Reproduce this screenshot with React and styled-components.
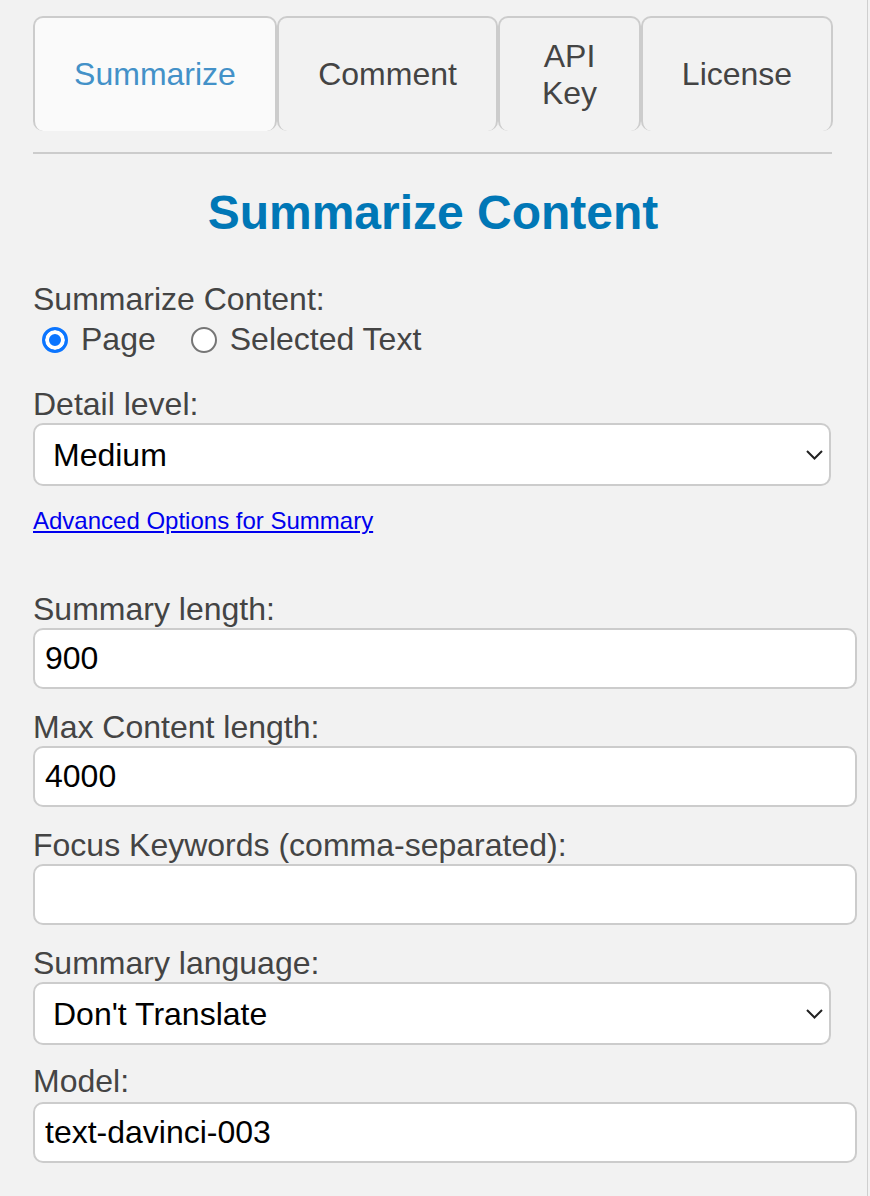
import React from "react";
import styled, { createGlobalStyle } from "styled-components";

const GlobalStyle = createGlobalStyle`
    html, body {
        margin: 0;
        padding: 0;
        background-color: #f2f2f2;
    }
    body {
        font-family: "Liberation Sans", Arial, Helvetica, sans-serif;
        font-size: 32px;
        color: #444;
    }
`;

const Page = styled.div`
    width: 868px;
    min-height: 1196px;
    box-sizing: border-box;
    border-right: 1px solid #cfcfcf;
    padding: 16px 0 0 33px;
`;

const Container = styled.div`
    width: 800px;
`;

const Tabs = styled.div`
    display: flex;
    height: 115px;
`;

const Tab = styled.button`
    width: ${(props) => props.width}px;
    flex: none;
    display: flex;
    align-items: center;
    justify-content: center;
    box-sizing: border-box;
    padding: 0 40px;
    border: 2px solid #cccccc;
    border-bottom: none;
    border-radius: 10px;
    background-color: ${(props) => (props.active ? "#fafafa" : "#f2f2f2")};
    color: ${(props) => (props.active ? "#4391c8" : "#444")};
    font-family: inherit;
    font-size: 32px;
    line-height: 37px;
    text-align: center;
    cursor: pointer;
`;

const Divider = styled.div`
    height: 2px;
    width: 799px;
    margin-top: 21px;
    background-color: #cccccc;
`;

const Title = styled.h2`
    margin: 31px 0 0 0;
    font-size: 48px;
    line-height: 55px;
    font-weight: bold;
    color: #0077b6;
    text-align: center;
`;

const Field = styled.div`
    margin-top: ${(props) => props.top}px;
`;

const Label = styled.label`
    display: block;
    font-size: 32px;
    line-height: 37px;
    color: #444;
    margin-bottom: ${(props) => props.gap || 0}px;
`;

const RadioRow = styled.div`
    display: flex;
    align-items: center;
    height: 43px;
    padding-left: 9px;
`;

const RadioOption = styled.label`
    display: flex;
    align-items: center;
    margin-right: 35px;
    font-size: 32px;
    color: #444;
`;

const Radio = styled.input`
    appearance: none;
    width: 26px;
    height: 26px;
    margin: 0 13px 0 0;
    box-sizing: border-box;
    border-radius: 50%;
    border: 2px solid #767676;
    background-color: #fff;
    &:checked {
        border: 3px solid #0b75ff;
        box-shadow: inset 0 0 0 4px #fff;
        background-color: #0b75ff;
    }
`;

const SelectWrap = styled.div`
    position: relative;
    width: 798px;
`;

const Select = styled.select`
    appearance: none;
    display: block;
    width: 100%;
    height: 63px;
    box-sizing: border-box;
    padding: 0 40px 0 18px;
    border: 2px solid #cccccc;
    border-radius: 10px;
    background-color: #fff;
    color: #000;
    font-family: inherit;
    font-size: 32px;
`;

const Chevron = styled.svg`
    position: absolute;
    right: 8px;
    top: 27px;
    pointer-events: none;
`;

const Input = styled.input`
    display: block;
    width: 800px;
    box-sizing: content-box;
    padding: 0 10px;
    height: 57px;
    border: 2px solid #cccccc;
    border-radius: 10px;
    background-color: #fff;
    color: #000;
    font-family: inherit;
    font-size: 32px;
    outline: none;
`;

const AdvancedLink = styled.a`
    display: inline-block;
    margin-top: 21px;
    font-size: 24px;
    line-height: 28px;
    color: #0000ee;
    text-decoration: underline;
`;

const tabs = [
    { name: "Summarize", width: 244, active: true },
    { name: "Comment", width: 221 },
    { name: "API Key", width: 143 },
    { name: "License", width: 192 },
];

const DropDown = ({ value, options }) => (
    <SelectWrap>
        <Select defaultValue={value}>
            {options.map((o) => (
                <option key={o}>{o}</option>
            ))}
        </Select>
        <Chevron width="17" height="10" viewBox="0 0 17 10">
            <path d="M1 1 L8.5 8.5 L16 1" fill="none" stroke="#222" strokeWidth="2" />
        </Chevron>
    </SelectWrap>
);

const App = () => {
    return (
        <>
            <GlobalStyle />
            <Page>
                <Container>
                    <Tabs>
                        {tabs.map((t) => (
                            <Tab key={t.name} width={t.width} active={t.active ? 1 : 0}>
                                {t.name}
                            </Tab>
                        ))}
                    </Tabs>
                    <Divider />
                    <Title>Summarize Content</Title>

                    <Field top={41}>
                        <Label>Summarize Content:</Label>
                        <RadioRow>
                            <RadioOption>
                                <Radio type="radio" name="scope" defaultChecked />
                                Page
                            </RadioOption>
                            <RadioOption>
                                <Radio type="radio" name="scope" />
                                Selected Text
                            </RadioOption>
                        </RadioRow>
                    </Field>

                    <Field top={25}>
                        <Label>Detail level:</Label>
                        <DropDown value="Medium" options={["Short", "Medium", "Long"]} />
                    </Field>

                    <AdvancedLink href="#">Advanced Options for Summary</AdvancedLink>

                    <Field top={54}>
                        <Label>Summary length:</Label>
                        <Input defaultValue="900" />
                    </Field>

                    <Field top={20}>
                        <Label>Max Content length:</Label>
                        <Input defaultValue="4000" />
                    </Field>

                    <Field top={20}>
                        <Label>Focus Keywords (comma-separated):</Label>
                        <Input defaultValue="" />
                    </Field>

                    <Field top={20}>
                        <Label>Summary language:</Label>
                        <DropDown value="Don't Translate" options={["Don't Translate", "English", "Spanish"]} />
                    </Field>

                    <Field top={18}>
                        <Label gap={2}>Model:</Label>
                        <Input defaultValue="text-davinci-003" />
                    </Field>
                </Container>
            </Page>
        </>
    );
};

export default App;
